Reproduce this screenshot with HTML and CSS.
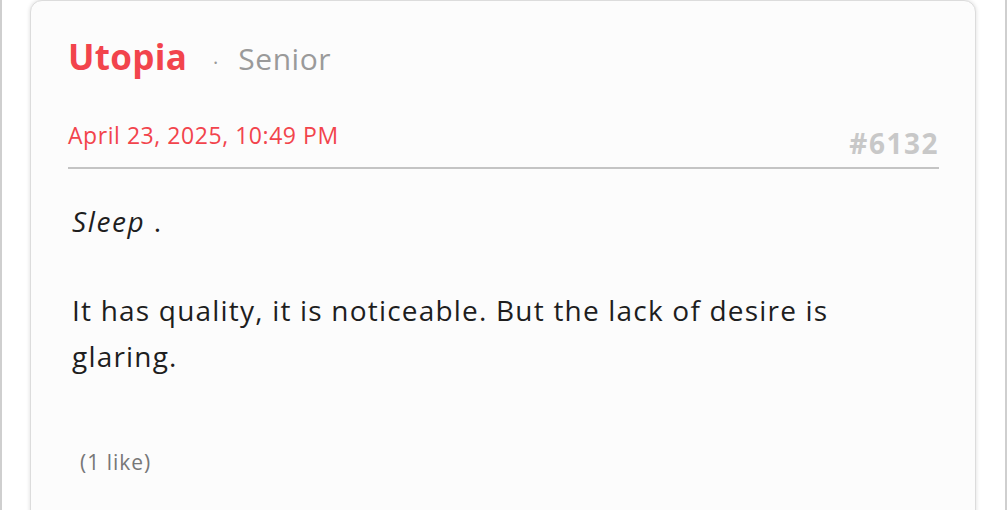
FILE: index.html
```html
<!DOCTYPE html>
<html lang="en">
<head>
<meta charset="utf-8">
<title>Post</title>
<link rel="stylesheet" href="styles.css">
</head>
<body>
<div class="page">
  <article class="post">
    <header class="post-head">
      <span class="author">Utopia</span>
      <span class="sep">·</span>
      <span class="rank">Senior</span>
    </header>
    <div class="meta">
      <span class="date">April 23, 2025, 10:49 PM</span>
      <span class="post-id">#6132</span>
    </div>
    <div class="content">
      <p><em>Sleep</em> .</p>
      <p>It has quality, it is noticeable. But the lack of desire is glaring.</p>
    </div>
    <div class="likes">(1 like)</div>
  </article>
</div>
</body>
</html>
```

FILE: styles.css
```css
html, body {
  margin: 0;
  padding: 0;
  background: #ffffff;
  height: 510px;
  overflow: hidden;
}

body {
  font-family: "Open Sans", Lato, sans-serif;
}

.page {
  width: 1007px;
  height: 510px;
  box-sizing: border-box;
  border-left: 2px solid #cfcfcf;
  border-right: 2px solid #cfcfcf;
  padding: 0 29px 0 28px;
  display: flex;
  flex-direction: column;
}

.post {
  background: #fcfcfc;
  border: 1px solid #dcdcdc;
  border-radius: 12px;
  box-shadow: 0 0 4px rgba(0, 0, 0, 0.14);
  padding: 31px 36px 0 37px;
  flex: 1;
  margin-bottom: -20px;
}

.post-head {
  display: flex;
  align-items: baseline;
  height: 50px;
}

.author {
  color: #f2444c;
  font-weight: 700;
  font-size: 35px;
  line-height: 50px;
  letter-spacing: 0.3px;
}

.sep {
  color: #999;
  font-size: 20px;
  line-height: 50px;
  margin: 0 20px 0 26px;
}

.rank {
  color: #9a9a9a;
  font-size: 30px;
  line-height: 50px;
  letter-spacing: 0.5px;
}

.meta {
  display: flex;
  justify-content: space-between;
  margin-top: 38px;
  padding-bottom: 9px;
  border-bottom: 2px solid #c4c4c4;
}

.date {
  color: #f2444c;
  font-size: 23px;
  line-height: 30px;
  letter-spacing: 0.55px;
}

.post-id {
  color: #c8c8c8;
  font-weight: 700;
  font-size: 28px;
  line-height: 30px;
  letter-spacing: 1.5px;
  margin-top: 8px;
}

.content {
  padding: 29px 4px 0;
  color: #1e1e1e;
  font-size: 28px;
  line-height: 46px;
  letter-spacing: 1.2px;
  max-width: 800px;
}

.content p {
  margin: 0 0 43px;
}

.content p:last-child {
  margin-bottom: 0;
}

.content em {
  letter-spacing: 1.6px;
}

.likes {
  color: #777;
  font-size: 21px;
  line-height: 24px;
  letter-spacing: 1px;
  margin: 71px 0 0 12px;
}
```
